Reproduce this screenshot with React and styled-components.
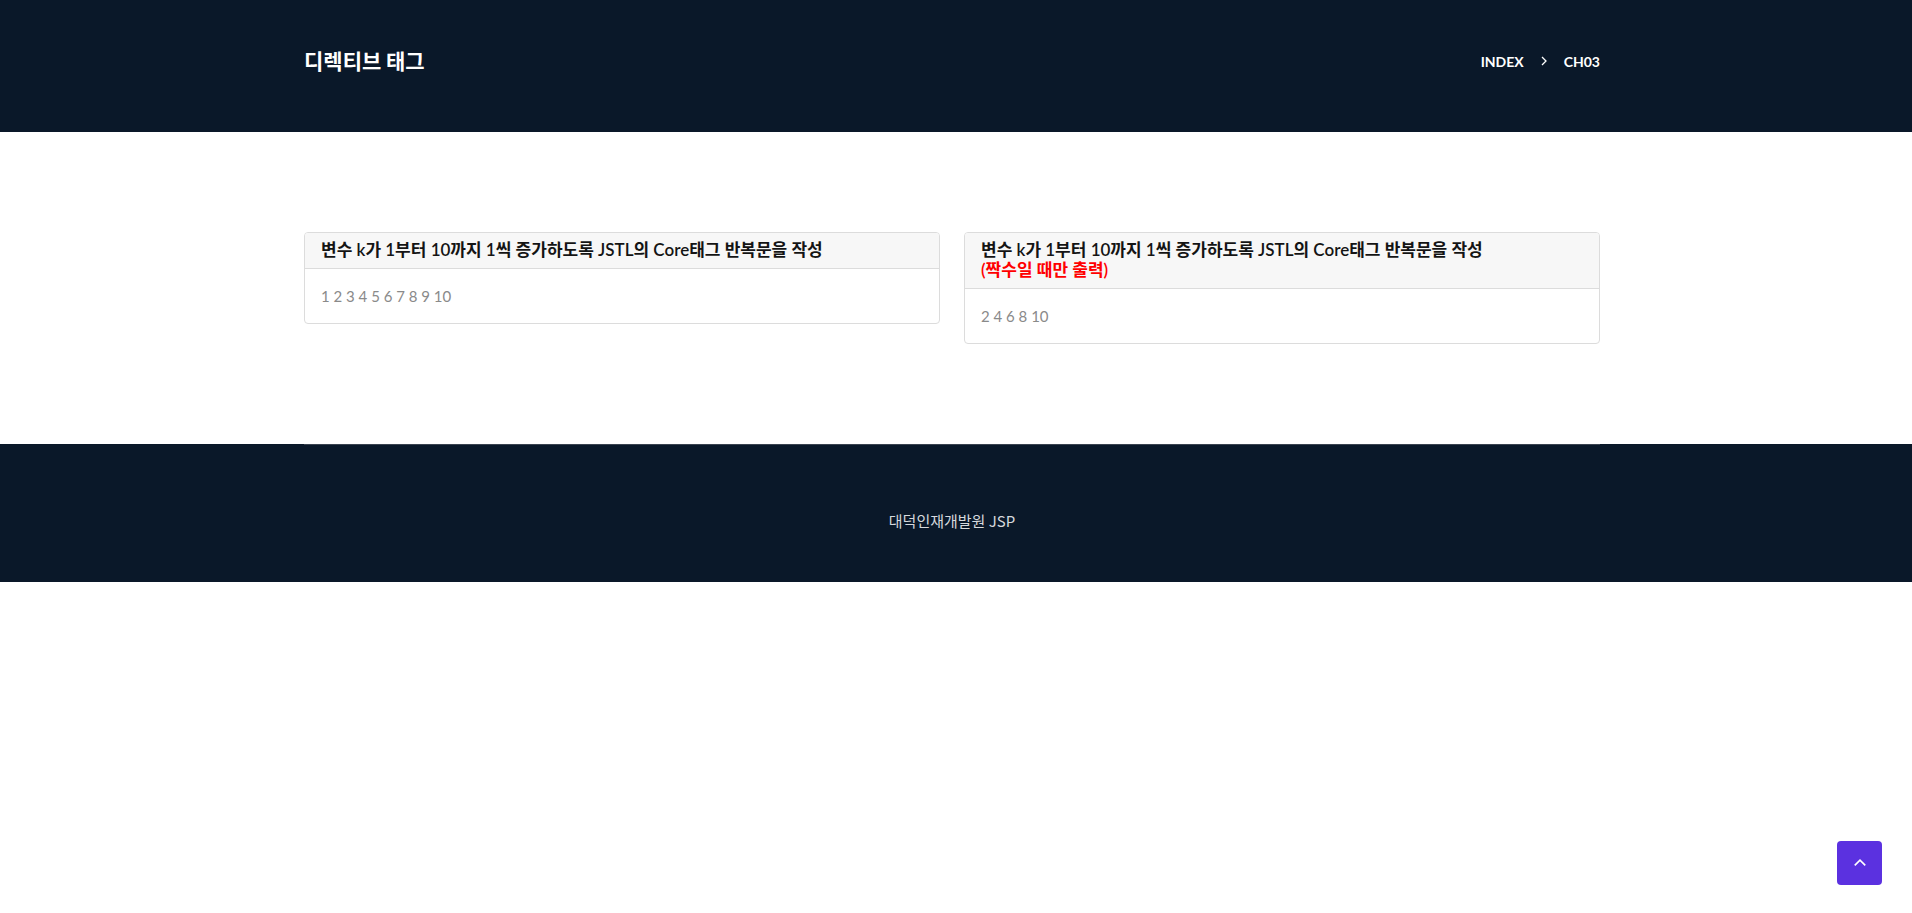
import React from "react";
import styled, { createGlobalStyle } from "styled-components";

const GlobalStyle = createGlobalStyle`
  * { box-sizing: border-box; }
  body {
    margin: 0;
    background: #fff;
    font-family: "Lato", "Noto Sans CJK KR", sans-serif;
  }
`;

const Container = styled.div`
  width: 1320px;
  margin-left: calc(50% - 664px);
  padding: 0 12px;
`;

const Header = styled.header`
  background: #0a1829;
  height: 132px;
`;

const HeaderInner = styled(Container)`
  display: flex;
  justify-content: space-between;
  align-items: center;
  padding-top: 46px;
`;

const PageTitle = styled.h1`
  margin: 0;
  font-family: "Noto Sans CJK KR", sans-serif;
  font-size: 21px;
  line-height: 28px;
  font-weight: 700;
  color: #fff;
`;

const Crumbs = styled.ol`
  display: flex;
  align-items: center;
  gap: 14px;
  margin: 4px 0 0;
  padding: 0;
  list-style: none;
  font-size: 14px;
  font-weight: 700;
  color: #fff;
  line-height: 20px;
`;

const Main = styled.section`
  padding: 100px 0;
`;

const Row = styled(Container)`
  display: grid;
  grid-template-columns: 1fr 1fr;
  gap: 24px;
  align-items: start;
`;

const Card = styled.div`
  border: 1px solid #dcdcdc;
  border-radius: 4px;
  background: #fff;
  overflow: hidden;
`;

const CardHeader = styled.div`
  background: #f7f7f7;
  border-bottom: 1px solid #dcdcdc;
  padding: 7px 16px 8px;
`;

const CardTitle = styled.h5`
  margin: 0;
  font-size: 17px;
  line-height: 20px;
  font-weight: 600;
  color: #141414;
`;

const Note = styled.span`
  display: block;
  color: #ff0000;
`;

const CardBody = styled.div`
  padding: 16px;
  font-size: 15px;
  line-height: 22px;
  color: #8a8a8a;
`;

const Footer = styled.footer`
  background: #0a1829;
`;

const FooterLine = styled.div`
  border-top: 1px solid #3a4350;
  padding: 64px 0 49px;
  text-align: center;
  font-family: "Noto Sans CJK KR", sans-serif;
  font-size: 15px;
  line-height: 24px;
  color: #d6d9dd;
`;

const TopButton = styled.a`
  position: fixed;
  right: 30px;
  bottom: 28px;
  width: 45px;
  height: 44px;
  border-radius: 4px;
  background: #5b31e0;
  display: flex;
  align-items: center;
  justify-content: center;
`;

const Chevron = ({ dir = "right", size = 12, stroke = "#fff" }) => (
  <svg width={size} height={size} viewBox="0 0 12 12" fill="none">
    {dir === "right" ? (
      <path d="M4 2l4 4-4 4" stroke={stroke} strokeWidth="1.3" />
    ) : (
      <path d="M1.5 8l4.5-4.5L10.5 8" stroke={stroke} strokeWidth="1.4" />
    )}
  </svg>
);

const items = Array.from({ length: 10 }, (_, i) => i + 1);

export default function App() {
  return (
    <>
      <GlobalStyle />
      <Header>
        <HeaderInner>
          <PageTitle>디렉티브 태그</PageTitle>
          <Crumbs>
            <li>INDEX</li>
            <li>
              <Chevron />
            </li>
            <li>CH03</li>
          </Crumbs>
        </HeaderInner>
      </Header>

      <Main>
        <Row>
          <Card>
            <CardHeader>
              <CardTitle>변수 k가 1부터 10까지 1씩 증가하도록 JSTL의 Core태그 반복문을 작성</CardTitle>
            </CardHeader>
            <CardBody>{items.join(" ")}</CardBody>
          </Card>
          <Card>
            <CardHeader>
              <CardTitle>
                변수 k가 1부터 10까지 1씩 증가하도록 JSTL의 Core태그 반복문을 작성
                <Note>(짝수일 때만 출력)</Note>
              </CardTitle>
            </CardHeader>
            <CardBody>{items.filter((k) => k % 2 === 0).join(" ")}</CardBody>
          </Card>
        </Row>
      </Main>

      <Footer>
        <Container>
          <FooterLine>대덕인재개발원 JSP</FooterLine>
        </Container>
      </Footer>

      <TopButton href="#">
        <Chevron dir="up" size={14} />
      </TopButton>
    </>
  );
}
